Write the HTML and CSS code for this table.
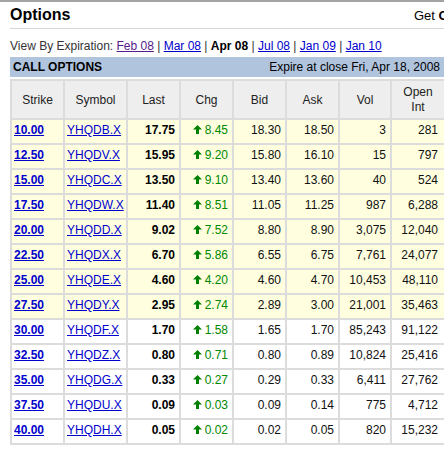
FILE: index.html
```html
<!DOCTYPE html>
<html>
<head>
<meta charset="utf-8">
<title>Options</title>
<link rel="stylesheet" href="styles.css">
</head>
<body>
<div class="page">
  <div class="head">
    <h1 class="title">Options</h1>
    <div class="get">Get <b>Chain</b></div>
  </div>
  <div class="expiry">View By Expiration: <a class="visited" href="#">Feb 08</a> | <a href="#">Mar 08</a> | <b>Apr 08</b> | <a href="#">Jul 08</a> | <a href="#">Jan 09</a> | <a href="#">Jan 10</a></div>
  <div class="bar"><b>CALL OPTIONS</b><span>Expire at close Fri, Apr 18, 2008</span></div>
  <table class="opts">
    <colgroup>
      <col class="c-strike"><col class="c-symbol"><col class="c-n"><col class="c-n"><col class="c-n"><col class="c-n"><col class="c-vol"><col class="c-oi">
    </colgroup>
    <thead>
      <tr><th>Strike</th><th>Symbol</th><th>Last</th><th>Chg</th><th>Bid</th><th>Ask</th><th>Vol</th><th>Open<br>Int</th></tr>
    </thead>
    <tbody id="rows"></tbody>
  </table>
</div>
<script src="app.js"></script>
</body>
</html>
```
FILE: app.js
```js
const data = [
  ["10.00","YHQDB.X","17.75","8.45","18.30","18.50","3","281",1],
  ["12.50","YHQDV.X","15.95","9.20","15.80","16.10","15","797",1],
  ["15.00","YHQDC.X","13.50","9.10","13.40","13.60","40","524",1],
  ["17.50","YHQDW.X","11.40","8.51","11.05","11.25","987","6,288",1],
  ["20.00","YHQDD.X","9.02","7.52","8.80","8.90","3,075","12,040",1],
  ["22.50","YHQDX.X","6.70","5.86","6.55","6.75","7,761","24,077",1],
  ["25.00","YHQDE.X","4.60","4.20","4.60","4.70","10,453","48,110",1],
  ["27.50","YHQDY.X","2.95","2.74","2.89","3.00","21,001","35,463",1],
  ["30.00","YHQDF.X","1.70","1.58","1.65","1.70","85,243","91,122",0],
  ["32.50","YHQDZ.X","0.80","0.71","0.80","0.89","10,824","25,416",0],
  ["35.00","YHQDG.X","0.33","0.27","0.29","0.33","6,411","27,762",0],
  ["37.50","YHQDU.X","0.09","0.03","0.09","0.14","775","4,712",0],
  ["40.00","YHQDH.X","0.05","0.02","0.02","0.05","820","15,232",0]
];
const arrow = '<svg class="up" width="9" height="9" viewBox="0 0 9 9"><path d="M4.5 0 L9 4.6 L6 4.6 L6 9 L3 9 L3 4.6 L0 4.6 Z" fill="#008000"/></svg>';
document.getElementById("rows").innerHTML = data.map(r =>
  `<tr class="${r[8] ? 'itm' : ''}"><td class="strike"><a href="#">${r[0]}</a></td><td class="sym"><a href="#">${r[1]}</a></td><td class="num last">${r[2]}</td><td class="num chg">${arrow}${r[3]}</td><td class="num">${r[4]}</td><td class="num">${r[5]}</td><td class="num">${r[6]}</td><td class="num oi">${r[7]}</td></tr>`
).join("");
```
FILE: styles.css
```css
html, body {
  margin: 0;
  overflow: hidden;
}
body {
  font-family: "Liberation Sans", Arial, sans-serif;
  font-size: 12px;
  color: #000;
  border-top: 2px solid #a3a3a3;
  background: #fff;
}
.page {
  padding-left: 10px;
  width: 436px;
}
.head {
  display: flex;
  align-items: baseline;
  padding: 4px 0 3px;
  border-bottom: 1px solid #d6d6d6;
  line-height: 18px;
}
.title {
  font-size: 16px;
  font-weight: bold;
  margin: 0;
}
.get {
  margin-left: auto;
  width: 32px;
  white-space: nowrap;
  overflow: hidden;
  font-size: 13px;
}
.expiry {
  margin-top: 10px;
  line-height: 15px;
  color: #333;
}
.expiry b { color: #000; }
a { color: #0000cc; }
a.visited { color: #551a8b; }
.bar {
  margin-top: 3px;
  display: flex;
  justify-content: space-between;
  background: #b0c4de;
  line-height: 20px;
  padding: 0 6px 0 3px;
}
.opts {
  margin-top: 2px;
  border-collapse: separate;
  border-spacing: 0;
  table-layout: fixed;
  width: 436px;
  border-right: 2px solid #dcdcdc;
  border-bottom: 2px solid #dcdcdc;
}
.c-strike { width: 53px; }
.c-symbol { width: 63px; }
.c-n { width: 53px; }
.c-vol { width: 52px; }
.c-oi { width: 54px; }
.opts th, .opts td {
  border-left: 2px solid #dcdcdc;
  border-top: 2px solid #dcdcdc;
  white-space: nowrap;
  overflow: hidden;
}
.opts th {
  background: #eeeeee;
  font-weight: normal;
  color: #222;
  line-height: 15px;
  padding: 4px 0 3px;
  text-align: center;
}
.opts td {
  line-height: 21px;
  padding: 0 4px 2px 2px;
  color: #111;
}
.opts tr.itm td { background: #ffffe0; }
.opts td.strike a { font-weight: bold; }
.opts td.num { text-align: right; }
.opts td.last { font-weight: bold; color: #000; }
.opts td.chg { color: #008800; }
.opts td.oi { padding-right: 6px; }
.up {
  vertical-align: 0;
  margin-right: 3px;
}
```
